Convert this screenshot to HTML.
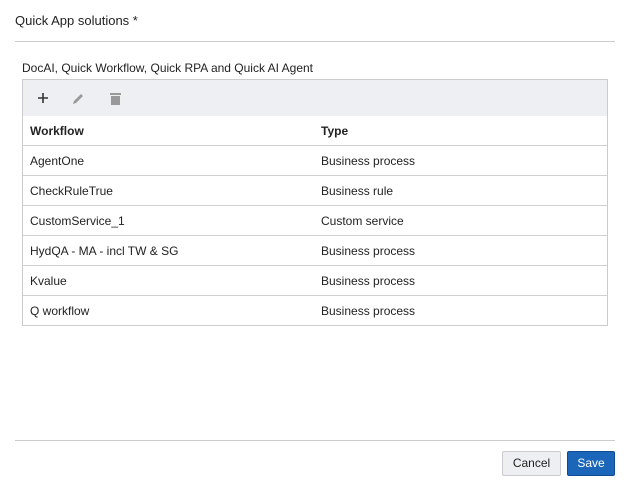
<!DOCTYPE html>
<html><head><style>
body{margin:0;width:630px;height:490px;background:#fff;font-family:"Liberation Sans",sans-serif;font-size:12px;color:#222;position:relative;overflow:hidden}
.a{position:absolute}
table{border-collapse:collapse;width:100%;font-size:12px}
td{height:29px;border-top:1px solid #d0d0d0;padding:0 0 0 7px;vertical-align:middle}
</style></head><body>
<div class="a" style="left:15px;top:13px;font-size:13px">Quick App solutions *</div>
<div class="a" style="left:15px;top:41px;width:600px;height:1px;background:#ccc"></div>
<div class="a" style="left:22px;top:61px">DocAI, Quick Workflow, Quick RPA and Quick AI Agent</div>
<div class="a" style="left:22px;top:79px;width:584px;height:245px;border:1px solid #ccc">
<div style="height:36px;background:#eeeff3;position:relative">
<svg class="a" style="left:14px;top:12px" width="12" height="12"><path d="M6 1v10M1 6h10" stroke="#333" stroke-width="1.6"/></svg>
<svg class="a" style="left:49px;top:12px" width="13" height="13"><path d="M1 12l1-3 7-7 2 2-7 7z" fill="#999"/></svg>
<svg class="a" style="left:87px;top:12px" width="11" height="13"><path d="M0 1h11v2H0zM1 4h9v9H1z" fill="#999"/></svg>
</div>
<table>
<tr><td style="border-top:none;font-weight:bold;width:284px">Workflow</td><td style="border-top:none;font-weight:bold">Type</td></tr>
<tr><td>AgentOne</td><td>Business process</td></tr>
<tr><td>CheckRuleTrue</td><td>Business rule</td></tr>
<tr><td>CustomService_1</td><td>Custom service</td></tr>
<tr><td>HydQA - MA - incl TW &amp; SG</td><td>Business process</td></tr>
<tr><td>Kvalue</td><td>Business process</td></tr>
<tr><td>Q workflow</td><td>Business process</td></tr>
</table></div>
<div class="a" style="left:15px;top:440px;width:600px;height:1px;background:#ccc"></div>
<div class="a" style="left:502px;top:451px;width:57px;height:23px;border:1px solid #ccc;background:#eeeff3;border-radius:2px;text-align:center;line-height:23px">Cancel</div>
<div class="a" style="left:567px;top:451px;width:46px;height:23px;border:1px solid #0f4c96;background:#1b66b8;color:#fff;border-radius:2px;text-align:center;line-height:23px">Save</div>
</body></html>
